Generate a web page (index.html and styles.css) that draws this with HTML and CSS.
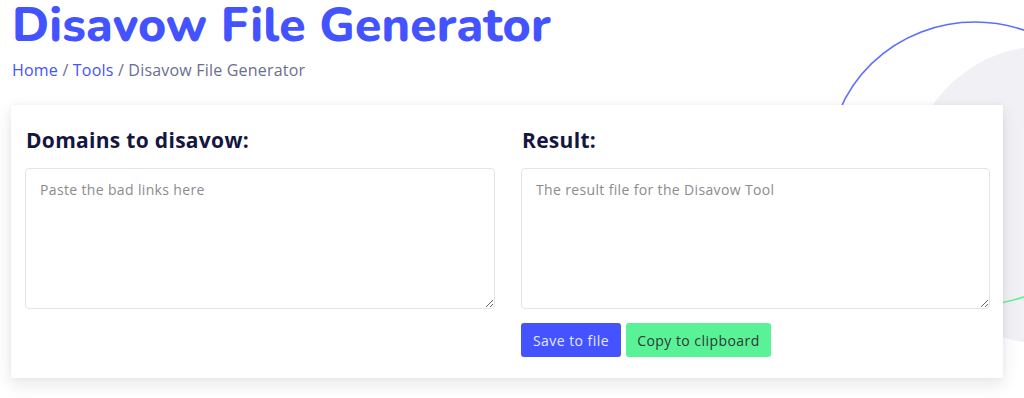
FILE: index.html
```html
<!DOCTYPE html>
<html lang="en">
<head>
<meta charset="utf-8">
<title>Disavow File Generator</title>
<link rel="stylesheet" href="styles.css">
</head>
<body>
<div class="page">
  <svg class="decor" width="1024" height="398" viewBox="0 0 1024 398" aria-hidden="true">
    <defs>
      <linearGradient id="ring" x1="0" y1="0" x2="0" y2="1">
        <stop offset="0" stop-color="#5b6cff"/>
        <stop offset="0.55" stop-color="#6f7cf5"/>
        <stop offset="0.8" stop-color="#5ee69a"/>
        <stop offset="1" stop-color="#5af297"/>
      </linearGradient>
    </defs>
    <ellipse cx="1040" cy="195" rx="135" ry="148" fill="#f1f1f5"/>
    <ellipse cx="975" cy="163.5" rx="146" ry="141.5" fill="none" stroke="url(#ring)" stroke-width="1.6"/>
  </svg>
  <header class="head">
    <h1 class="title">Disavow File Generator</h1>
    <nav class="crumbs"><a href="#">Home</a> / <a href="#">Tools</a> / <span>Disavow File Generator</span></nav>
  </header>
  <section class="card">
    <div class="col">
      <h2 class="label">Domains to disavow:</h2>
      <textarea class="box" placeholder="Paste the bad links here"></textarea>
    </div>
    <div class="col">
      <h2 class="label">Result:</h2>
      <textarea class="box" placeholder="The result file for the Disavow Tool"></textarea>
      <div class="actions">
        <button class="btn btn-blue">Save to file</button>
        <button class="btn btn-green">Copy to clipboard</button>
      </div>
    </div>
  </section>
</div>
</body>
</html>
```
FILE: styles.css
```css
* { box-sizing: border-box; }
html, body { margin: 0; padding: 0; background: #ffffff; }
body { font-family: "Open Sans", "Liberation Sans", sans-serif; color: #14163f; }
.page { position: relative; width: 1024px; height: 398px; overflow: hidden; }
.decor { position: absolute; left: 0; top: 0; z-index: 0; }
.head { position: relative; z-index: 1; padding: 0 0 0 12px; }
.title {
  margin: 0;
  font-family: "Nunito", "Lato", sans-serif;
  font-weight: 800;
  font-size: 48px;
  line-height: 50px;
  color: #4353ff;
  letter-spacing: 0.15px;
}
.crumbs {
  margin-top: 10px;
  font-size: 16px;
  line-height: 20px;
  letter-spacing: 0.2px;
  color: #6b6e8f;
}
.crumbs a { color: #4353ff; text-decoration: none; }
.card {
  position: relative;
  z-index: 1;
  margin: 25px 0 0 11px;
  width: 992px;
  height: 273px;
  background: #ffffff;
  box-shadow: 0 6px 16px rgba(20, 22, 63, 0.10), 0 0 6px rgba(20, 22, 63, 0.04);
  padding: 21px 13px 0 14px;
  display: grid;
  grid-template-columns: 470px 469px;
  column-gap: 26px;
}
.col { display: flex; flex-direction: column; }
.label {
  margin: 0 0 14px 1px;
  font-size: 21px;
  line-height: 28px;
  font-weight: 700;
  letter-spacing: 0.3px;
  color: #14163f;
}
.box {
  width: 100%;
  height: 141px;
  border: 1px solid #e4e4e6;
  border-radius: 4px;
  padding: 11px 14px;
  font-family: "Open Sans", sans-serif;
  font-size: 14px;
  letter-spacing: 0.35px;
  color: #333;
  resize: vertical;
}
.box::placeholder { color: #8b8b8b; }
.actions { display: flex; gap: 5px; margin-top: 14px; }
.btn {
  height: 34px;
  border: 0;
  border-radius: 3px;
  padding: 0;
  font-family: "Open Sans", sans-serif;
  font-size: 14px;
  letter-spacing: 0.45px;
  cursor: pointer;
}
.btn-blue { background: #4353ff; color: #e4e7ff; width: 100px; }
.btn-green { background: #5af297; color: #2c3a34; width: 145px; }
```
